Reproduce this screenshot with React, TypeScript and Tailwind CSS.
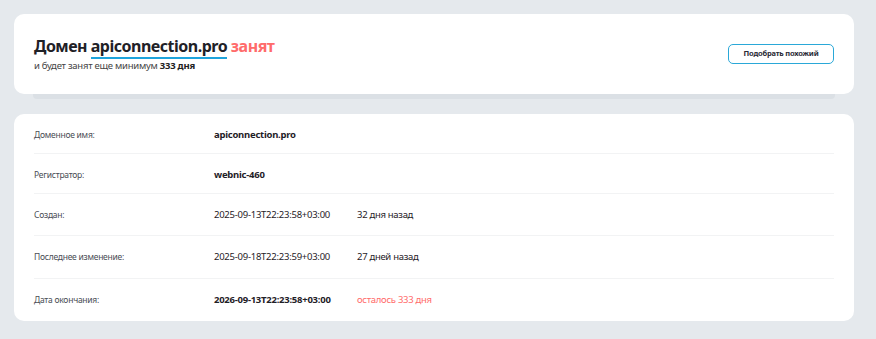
import React from "react";

type Row = {
  label: string;
  value: string;
  bold?: boolean;
  extra?: string;
  extraRed?: boolean;
  h: string;
};

const rows: Row[] = [
  { label: "Доменное имя:", value: "apiconnection.pro", bold: true, h: "h-[40px]" },
  { label: "Регистратор:", value: "webnic-460", bold: true, h: "h-[40px]" },
  { label: "Создан:", value: "2025-09-13T22:23:58+03:00", extra: "32 дня назад", h: "h-[42px]" },
  { label: "Последнее изменение:", value: "2025-09-18T22:23:59+03:00", extra: "27 дней назад", h: "h-[43px]" },
  { label: "Дата окончания:", value: "2026-09-13T22:23:58+03:00", bold: true, extra: "осталось 333 дня", extraRed: true, h: "h-[42px]" },
];

export default function App() {
  return (
    <div className="min-h-screen bg-[#e5e9ed] pl-[14px] pr-[22px] py-[14px] font-['Noto_Sans',sans-serif] text-[#222]">
      <div className="relative">
        <div className="relative z-10 h-[80px] rounded-[10px] bg-white px-[20px] flex items-center justify-between">
          <div className="-mt-[1px]">
            <h1 className="text-[16px] font-bold leading-[21px] tracking-[-0.5px] text-[#1f2127]">
              Домен{" "}
              <span className="border-b-2 border-[#1ea4dc]">apiconnection.pro</span>{" "}
              <span className="text-[#ff6b6b]">занят</span>
            </h1>
            <p className="mt-[3px] text-[9.5px] leading-[12px] tracking-[-0.25px] text-[#444]">
              и будет занят еще минимум <b className="font-bold text-[#222]">333 дня</b>
            </p>
          </div>
          <button className="h-[20px] w-[106px] rounded-[5px] border border-[#2aa8d8] bg-white text-[7.5px] font-bold tracking-[-0.2px] text-[#2a2a35]">
            Подобрать похожий
          </button>
        </div>
        <div className="mx-[19px] h-[6px] -mt-[1px] rounded-b-[4px] bg-[#dbe0e5]" />
      </div>

      <div className="mt-[15px] rounded-[10px] bg-white px-[20px]">
        {rows.map((r, i) => (
          <div
            key={r.label}
            className={`flex pt-[14px] ${r.h} ${i < rows.length - 1 ? "border-b border-[#f2f3f4]" : ""}`}
          >
            <div className="w-[180px] text-[8.5px] leading-[13px] tracking-[-0.25px] text-[#4a4d55]">{r.label}</div>
            <div className={`w-[143px] text-[9.5px] leading-[13px] tracking-[-0.25px] text-[#1f2127] ${r.bold ? "font-bold" : ""}`}>
              {r.value}
            </div>
            {r.extra && (
              <div className={`text-[9.5px] leading-[13px] tracking-[-0.3px] ${r.extraRed ? "text-[#ff6b6b]" : "text-[#1f2127]"}`}>
                {r.extra}
              </div>
            )}
          </div>
        ))}
      </div>
    </div>
  );
}
